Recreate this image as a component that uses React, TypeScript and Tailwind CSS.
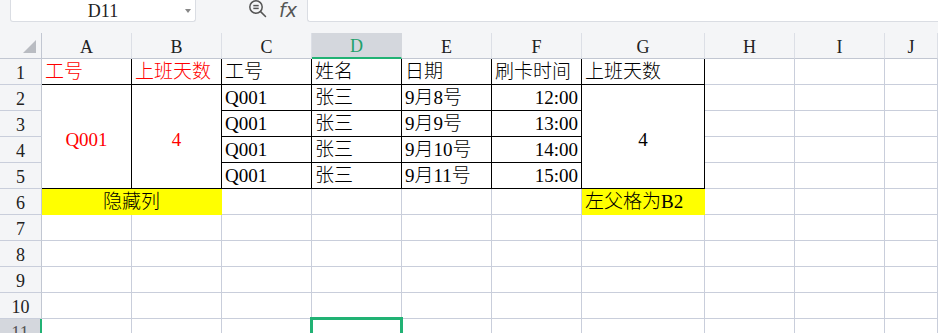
import React from 'react';

const GRID = 'border-[#c9cedb]';

type Tone = 'grid' | 'black' | 'yellow';

interface CellProps {
  text?: string;
  red?: boolean;
  align?: 'left' | 'center' | 'right';
  tone?: Tone;
  className?: string;
}

function Cell({ text, red, align = 'left', tone = 'grid', className = '' }: CellProps) {
  const toneCls =
    tone === 'black'
      ? 'border-black'
      : tone === 'yellow'
        ? 'border-[#ffff00] bg-[#ffff00]'
        : GRID;
  const alignCls =
    align === 'center' ? 'justify-center' : align === 'right' ? 'justify-end pr-[3px]' : 'justify-start pl-[3px]';
  return (
    <div
      className={`flex items-end pb-[1px] border-r border-b overflow-hidden whitespace-nowrap leading-[22px] ${toneCls} ${alignCls} ${red ? 'text-[#ff0000]' : 'text-black'} ${className}`}
    >
      {text}
    </div>
  );
}

function RowHead({ n, active }: { n: number; active?: boolean }) {
  return (
    <div
      className={`flex items-center justify-center border-b border-[#c9cedb] text-[18px] leading-none ${
        active
          ? 'bg-[#d4d7dd] border-r-2 border-r-[#21b274] text-[#555]'
          : 'bg-[#f4f5f7] border-r border-r-[#c2c7d2] text-[#222]'
      }`}
    >
      <span className="pt-[3px]">{n}</span>
    </div>
  );
}

function ColHead({ l, active }: { l: string; active?: boolean }) {
  return (
    <div
      className={`flex items-end justify-center pb-[2px] text-[18px] leading-none border-r ${
        active
          ? 'bg-[#d4d7dd] border-r-[#d4d7dd] border-b-2 border-b-[#21b274] text-[#21a06b]'
          : 'bg-[#f4f5f7] border-r-[#dcdfe6] border-b border-b-[#c2c7d2] text-[#222]'
      }`}
    >
      {l}
    </div>
  );
}

function TopBar() {
  return (
    <div className="flex h-[22px] bg-[#f4f5f7]">
      <div className="w-[10px]" />
      {/* name box */}
      <div className="relative flex w-[186px] items-center justify-center rounded-b-[3px] border border-t-0 border-[#dadde3] bg-white text-[18px] leading-none text-[#222]">
        <span>D11</span>
        <span className="absolute right-[4px] top-[9px] h-0 w-0 border-x-[3px] border-t-[4px] border-x-transparent border-t-[#888]" />
      </div>
      <div className="flex w-[111px] items-start gap-[11px] pl-[52px]">
        <svg width="20" height="18" viewBox="0 0 20 18" fill="none" stroke="#555" strokeWidth="1.5">
          <circle cx="8" cy="7" r="6.2" />
          <line x1="5.3" y1="5.6" x2="10.7" y2="5.6" />
          <line x1="5.3" y1="8.4" x2="10.7" y2="8.4" />
          <line x1="12.6" y1="11.6" x2="17.5" y2="16.5" strokeLinecap="round" />
        </svg>
        <span className="mt-[1px] font-['DejaVu_Sans',sans-serif] text-[19px] italic leading-none text-[#555]">
          fx
        </span>
      </div>
      <div className="flex-1 rounded-bl-[3px] border border-r-0 border-t-0 border-[#dadde3] bg-white" />
    </div>
  );
}

const cols = ['A', 'B', 'C', 'D', 'E', 'F', 'G', 'H', 'I', 'J'];

const records = [
  { date: '9月8号', time: '12:00' },
  { date: '9月9号', time: '13:00' },
  { date: '9月10号', time: '14:00' },
  { date: '9月11号', time: '15:00' },
];

export default function App() {
  return (
    <div className="h-[333px] w-[938px] overflow-hidden bg-white font-['Liberation_Serif','Noto_Sans_CJK_SC',serif] text-[19px] font-light">
      <TopBar />
      <div className="h-[11px] bg-[#f4f5f7]" />
      <div className="grid grid-cols-[42px_repeat(6,90px)_123px_90px_90px_1fr] auto-rows-[26px]">
        {/* column headers */}
        <div className="relative border-r border-b border-r-[#c2c7d2] border-b-[#c2c7d2] bg-[#f4f5f7]">
          <span className="absolute right-[5px] bottom-[5px] h-0 w-0 border-b-[13px] border-l-[13px] border-b-[#b9bcc2] border-l-transparent" />
        </div>
        {cols.map((c) => (
          <ColHead key={c} l={c} active={c === 'D'} />
        ))}

        {/* row 1 */}
        <RowHead n={1} />
        <Cell text="工号" red tone="black" />
        <Cell text="上班天数" red tone="black" />
        <Cell text="工号" tone="black" />
        <Cell text="姓名" tone="black" />
        <Cell text="日期" tone="black" />
        <Cell text="刷卡时间" tone="black" />
        <Cell text="上班天数" tone="black" />
        <Cell />
        <Cell />
        <Cell />

        {/* rows 2-5 */}
        {records.map((r, i) => (
          <React.Fragment key={r.date}>
            <RowHead n={i + 2} />
            {i === 0 && (
              <>
                <Cell text="Q001" red align="center" tone="black" className="row-span-4 !items-center !pb-0 pt-[6px]" />
                <Cell text="4" red align="center" tone="black" className="row-span-4 !items-center !pb-0 pt-[6px]" />
              </>
            )}
            <Cell text="Q001" tone="black" />
            <Cell text="张三" tone="black" />
            <Cell text={r.date} tone="black" />
            <Cell text={r.time} align="right" tone="black" />
            {i === 0 && (
              <Cell text="4" align="center" tone="black" className="row-span-4 !items-center !pb-0 pt-[6px]" />
            )}
            <Cell />
            <Cell />
            <Cell />
          </React.Fragment>
        ))}

        {/* row 6 */}
        <RowHead n={6} />
        <Cell text="隐藏列" align="center" tone="yellow" className="col-span-2" />
        <Cell />
        <Cell />
        <Cell />
        <Cell />
        <Cell text="左父格为B2" tone="yellow" />
        <Cell />
        <Cell />
        <Cell />

        {/* rows 7-11 */}
        {[7, 8, 9, 10, 11].map((n) => (
          <React.Fragment key={n}>
            <RowHead n={n} active={n === 11} />
            {cols.map((c) => (
              <div key={c} className={`relative border-r border-b ${GRID}`}>
                {n === 11 && c === 'D' && (
                  <span className="absolute -left-[2px] -top-[2px] h-[30px] w-[93px] border-[3px] border-[#21b274]" />
                )}
              </div>
            ))}
          </React.Fragment>
        ))}
      </div>
    </div>
  );
}
